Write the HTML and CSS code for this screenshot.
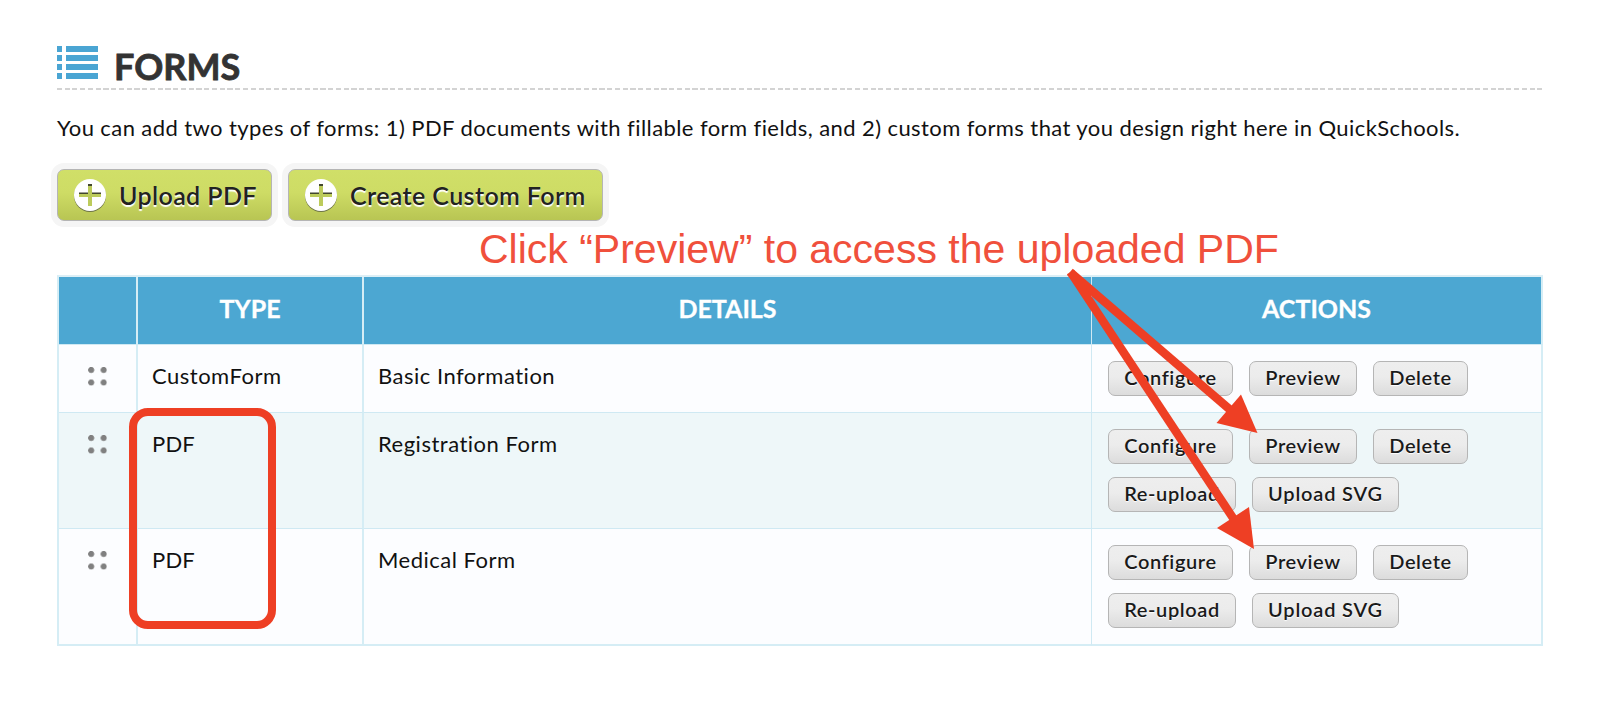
FILE: index.html
```html
<!DOCTYPE html>
<html lang="en">

<head>
    <meta charset="UTF-8">
    <meta name="viewport" content="width=device-width, initial-scale=1.0">
    <title>Forms</title>
    <link rel="stylesheet" href="styles.css">
</head>

<body>
    <div class="page">
        <div class="title">
            <svg class="title-icon" width="41" height="33" viewBox="0 0 41 33">
                <path d="M0 0h5v6H0zM9 0h32v6H9zM0 9h5v6H0zM9 9h32v6H9zM0 18h5v6H0zM9 18h32v6H9zM0 27h5v6H0zM9 27h32v6H9z" fill="#4aa5d3" />
            </svg>
            <h1>FORMS</h1>
        </div>
        <p class="intro">You can add two types of forms: 1) PDF documents with fillable form fields, and 2) custom forms that you design right here in QuickSchools.</p>

        <div class="toolbar">
            <button class="add add-pdf">
                <svg width="34" height="34" viewBox="0 0 34 34">
                    <circle cx="17" cy="18" r="16" fill="#6d7448" />
                    <circle cx="17" cy="17" r="16" fill="#fff" />
                    <path d="M15 6h4v9h9v4h-9v9h-4v-9H6v-4h9z" fill="#bccb5b" />
                    <path d="M15 6h4v2h-4zM6 14.500h9v1.500H6zM19 14.500h9v1.500h-9z" fill="#42462e" />
                </svg>
                <span>Upload PDF</span>
            </button>
            <button class="add add-custom">
                <svg width="34" height="34" viewBox="0 0 34 34">
                    <circle cx="17" cy="18" r="16" fill="#6d7448" />
                    <circle cx="17" cy="17" r="16" fill="#fff" />
                    <path d="M15 6h4v9h9v4h-9v9h-4v-9H6v-4h9z" fill="#bccb5b" />
                    <path d="M15 6h4v2h-4zM6 14.500h9v1.500H6zM19 14.500h9v1.500h-9z" fill="#42462e" />
                </svg>
                <span>Create Custom Form</span>
            </button>
        </div>

        <table class="forms">
            <colgroup>
                <col class="col-drag">
                <col class="col-type">
                <col class="col-details">
                <col class="col-actions">
            </colgroup>
            <tr class="head">
                <th></th>
                <th>TYPE</th>
                <th>DETAILS</th>
                <th>ACTIONS</th>
            </tr>
            <tr class="short">
                <td class="drag"><i class="dots"></i></td>
                <td>CustomForm</td>
                <td>Basic Information</td>
                <td>
                    <div class="actions">
                        <button class="btn configure">Configure</button>
                        <button class="btn preview">Preview</button>
                        <button class="btn delete">Delete</button>
                    </div>
                </td>
            </tr>
            <tr class="even">
                <td class="drag"><i class="dots"></i></td>
                <td class="pdf">PDF</td>
                <td>Registration Form</td>
                <td>
                    <div class="actions">
                        <button class="btn configure">Configure</button>
                        <button class="btn preview">Preview</button>
                        <button class="btn delete">Delete</button>
                    </div>
                    <div class="actions">
                        <button class="btn reupload">Re-upload</button>
                        <button class="btn svg-up">Upload SVG</button>
                    </div>
                </td>
            </tr>
            <tr class="last">
                <td class="drag"><i class="dots"></i></td>
                <td class="pdf">PDF</td>
                <td>Medical Form</td>
                <td>
                    <div class="actions">
                        <button class="btn configure">Configure</button>
                        <button class="btn preview">Preview</button>
                        <button class="btn delete">Delete</button>
                    </div>
                    <div class="actions">
                        <button class="btn reupload">Re-upload</button>
                        <button class="btn svg-up">Upload SVG</button>
                    </div>
                </td>
            </tr>
        </table>
    </div>

    <!-- notes on top of the page -->
    <div class="note">Click “Preview” to access the uploaded PDF</div>
    <div class="mark"></div>
    <svg class="arrows" width="1600" height="703" viewBox="0 0 1600 703">
        <g stroke="#ee3f24" stroke-width="8.500">
            <line x1="1070" y1="272" x2="1231" y2="410.500" />
            <line x1="1070.500" y1="272" x2="1235" y2="521" />
        </g>
        <g fill="#ee3f24">
            <polygon points="1257.500,433 1241,394.500 1216.500,423" />
            <polygon points="1254,549 1249,507 1217,528" />
        </g>
    </svg>
</body>

</html>
```
FILE: styles.css
```css
* {
    box-sizing: border-box;
    margin: 0;
    padding: 0;
}

body {
    width: 1600px;
    height: 703px;
    overflow: hidden;
    position: relative;
    background: #fff;
    color: #111;
    font-family: Lato, "Open Sans", sans-serif;
    font-size: 22px;
    font-variant-ligatures: none;
}

.page {
    padding: 46px 57px 0;
}

/* heading */
.title {
    display: flex;
    height: 44px;
    /* dashed line under the title */
    background: repeating-linear-gradient(to right, #d3d3d3 0, #d3d3d3 5px, #fff 5px, #fff 7.75px) left bottom / 100% 2px no-repeat;
}
.title h1 {
    margin-left: 16px;
    color: #333;
    font-size: 36px;
    font-weight: 700;
    line-height: 40px;
    -webkit-text-stroke: 0.8px #333;
}
.intro {
    margin-top: 23px;
    height: 30px;
    line-height: 30px;
    white-space: nowrap;
    letter-spacing: 0.417px;
}

/* green buttons */
.toolbar {
    display: flex;
    gap: 16px;
    margin-top: 26px;
}
.add {
    display: flex;
    align-items: center;
    height: 52px;
    padding-left: 15px;
    border: 1.5px solid #b5b5b5;
    border-radius: 7px;
    background: linear-gradient(#d0df68 0%, #cedc65 45%, #b8c553 100%);
    box-shadow: 0 0 0 6px #f5f5f5;
    color: #222;
    font-family: inherit;
    font-size: 25px;
    font-weight: 600;
    letter-spacing: 0.4px;
    text-shadow: 0 2px 1px #fff;
    white-space: nowrap;
}
.add span {
    margin-left: 12px;
    line-height: 30px;
}
.add-pdf {
    width: 215px;
}
.add-custom {
    width: 315px;
}

/* table */
.forms {
    width: 1486px;
    margin-top: 54px;
    table-layout: fixed;
    border-collapse: separate;
    border-spacing: 0;
    border-top: 2px solid #dceff6;
    border-left: 2px solid #d5edf5;
}
.col-drag {
    width: 79px;
}
.col-type {
    width: 226px;
}
.col-details {
    width: 728px;
}
.col-actions {
    width: 451px;
}
.forms th,
.forms td {
    border-right: 1px solid #cfe9f3;
    border-bottom: 1px solid #cfe9f3;
}
.forms th:nth-child(1),
.forms th:nth-child(2),
.forms th:nth-child(4),
.forms td:nth-child(1),
.forms td:nth-child(2),
.forms td:nth-child(4) {
    border-right: 2px solid #d5edf5;
}
.forms th {
    height: 68px;
    background: #4ca7d2;
    color: #fff;
    font-size: 25px;
    font-weight: 700;
    line-height: 30px;
    padding-bottom: 5px;
    -webkit-text-stroke: 0.3px #fff;
}
.forms td {
    height: 116px;
    padding: 16px 0 0 14px;
    background: #fcfdff;
    line-height: 30px;
    letter-spacing: 0.5px;
    vertical-align: top;
}
.forms td.pdf {
    letter-spacing: 0.2px;
}
.forms .short td {
    height: 68px;
}
.forms .even td {
    background: #eef7f9;
}
.forms .last td {
    height: 117px;
    border-bottom: 2px solid #d5edf5;
}
.forms td.drag {
    padding: 22px 0 0 29px;
}
.dots {
    display: block;
    width: 19px;
    height: 19px;
    background: radial-gradient(circle at 3.2px 3px, #808080 2.700px, transparent 3.400px) 0 0 / 12.5px 12.5px;
}

/* grey buttons */
.actions {
    display: flex;
    gap: 16px;
    padding-left: 2px;
}
.actions + .actions {
    margin-top: 13px;
}
.btn {
    height: 35px;
    padding-bottom: 4px;
    border: 1.5px solid #b5b5b5;
    border-radius: 7px;
    background: linear-gradient(#eee, #ececec 45%, #dcdcdc);
    color: #1a1a1a;
    font-family: inherit;
    font-size: 20px;
    font-weight: 600;
    line-height: 28px;
    letter-spacing: 0.6px;
    text-shadow: 0 1px 1px #fff;
    white-space: nowrap;
}
.configure {
    width: 125px;
}
.preview {
    width: 108px;
}
.delete {
    width: 95px;
}
.reupload {
    width: 128px;
}
.svg-up {
    width: 147px;
    letter-spacing: 0.8px;
}

/* red notes */
.note {
    position: absolute;
    left: 479px;
    top: 226px;
    color: #f0503c;
    font-family: "Liberation Sans", sans-serif;
    font-size: 41px;
    line-height: 46px;
    white-space: nowrap;
}
.mark {
    position: absolute;
    left: 129px;
    top: 408px;
    width: 147px;
    height: 221px;
    border: 8px solid #ee3f24;
    border-radius: 19px;
}
.arrows {
    position: absolute;
    left: 0;
    top: 0;
}
```
